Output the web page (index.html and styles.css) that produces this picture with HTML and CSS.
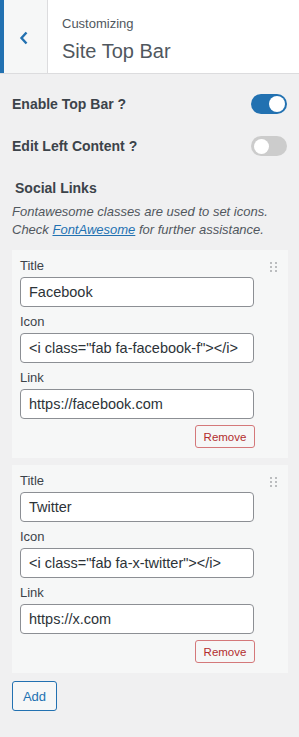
FILE: index.html
```html
<!DOCTYPE html>
<html lang="en">
<head>
<meta charset="utf-8">
<title>Site Top Bar</title>
<link rel="stylesheet" href="styles.css">
</head>
<body>
<div class="panel">
  <header class="head">
    <button class="back" aria-label="Back">
      <svg width="10" height="14" viewBox="0 0 10 14"><path d="M7.5 1.5 L2.5 7 L7.5 12.5" fill="none" stroke="#2271b1" stroke-width="2.4"/></svg>
    </button>
    <div class="head-text">
      <span class="crumb">Customizing</span>
      <h1 class="title">Site Top Bar</h1>
    </div>
  </header>

  <div class="body">
    <div class="toggle-row">
      <span class="toggle-label">Enable Top Bar ?</span>
      <span class="switch on"><span class="knob"></span></span>
    </div>
    <div class="toggle-row second">
      <span class="toggle-label">Edit Left Content ?</span>
      <span class="switch"><span class="knob"></span></span>
    </div>

    <h2 class="section">Social Links</h2>
    <p class="desc">Fontawesome classes are used to set icons.<br>Check <a href="#">FontAwesome</a> for further assistance.</p>

    <div class="card">
      <div class="fields">
        <label class="lbl first">Title</label>
        <div class="inp">Facebook</div>
        <label class="lbl">Icon</label>
        <div class="inp">&lt;i class="fab fa-facebook-f"&gt;&lt;/i&gt;</div>
        <label class="lbl">Link</label>
        <div class="inp">https://facebook.com</div>
        <div class="actions"><button class="remove">Remove</button></div>
      </div>
      <span class="handle"><i></i><i></i><i></i><i></i><i></i><i></i></span>
    </div>

    <div class="card">
      <div class="fields">
        <label class="lbl first">Title</label>
        <div class="inp">Twitter</div>
        <label class="lbl">Icon</label>
        <div class="inp">&lt;i class="fab fa-x-twitter"&gt;&lt;/i&gt;</div>
        <label class="lbl">Link</label>
        <div class="inp">https://x.com</div>
        <div class="actions"><button class="remove">Remove</button></div>
      </div>
      <span class="handle"><i></i><i></i><i></i><i></i><i></i><i></i></span>
    </div>

    <button class="add">Add</button>
  </div>
</div>
</body>
</html>
```

FILE: styles.css
```css
* { box-sizing: border-box; }
html, body { margin: 0; padding: 0; }
body {
  background: #f0f0f1;
  font-family: "Liberation Sans", Arial, sans-serif;
  color: #3c434a;
  width: 299px;
  height: 737px;
  overflow: hidden;
}
.head {
  display: flex;
  height: 74px;
  background: #fff;
  border-bottom: 1px solid #dcdcde;
}
.back {
  width: 48px;
  height: 73px;
  padding: 0;
  margin: 0;
  border: 0;
  border-left: 4px solid #2271b1;
  border-right: 1px solid #dcdcde;
  background: #f6f7f7;
  display: flex;
  align-items: center;
  justify-content: center;
  padding-right: 4px;
  padding-top: 2px;
}
.head-text {
  display: flex;
  flex-direction: column;
  padding: 15px 0 0 14px;
}
.crumb {
  font-size: 13px;
  line-height: 18px;
  color: #50575e;
}
.title {
  margin: 5px 0 0;
  font-size: 20px;
  line-height: 26px;
  font-weight: 400;
  color: #50575e;
}
.body {
  padding: 18px 12px 0 12px;
}
.toggle-row {
  display: flex;
  align-items: center;
  justify-content: space-between;
  height: 24px;
}
.toggle-row.second { margin-top: 18px; }
.toggle-label {
  font-size: 14px;
  font-weight: 700;
  color: #3c434a;
}
.switch {
  width: 36px;
  height: 20px;
  border-radius: 10px;
  background: #cccccc;
  display: flex;
  align-items: center;
  padding: 0 3px;
}
.switch .knob {
  width: 15px;
  height: 15px;
  border-radius: 50%;
  background: #fff;
}
.switch.on {
  background: #2271b1;
  justify-content: flex-end;
  padding: 0 2px;
}
.switch.on .knob {
  width: 16px;
  height: 16px;
}
.section {
  margin: 20px 0 0 3px;
  font-size: 14px;
  line-height: 20px;
  font-weight: 700;
  color: #3c434a;
}
.desc {
  margin: 5px 0 0;
  font-size: 13px;
  line-height: 18px;
  font-style: italic;
  color: #50575e;
}
.desc a { color: #2271b1; text-decoration: underline; }
.card {
  margin-top: 11px;
  width: 276px;
  background: #f6f7f7;
  display: flex;
  padding: 7px 8px 10px 8px;
}
.card + .card { margin-top: 7px; }
.fields {
  width: 234px;
  display: flex;
  flex-direction: column;
}
.lbl {
  display: block;
  font-size: 13px;
  line-height: 18px;
  margin: 6px 0 2px;
  color: #3c434a;
}
.lbl.first { margin-top: 0; }
.inp {
  height: 30px;
  border: 1px solid #8c8f94;
  border-radius: 4px;
  background: #fff;
  font-size: 14.5px;
  line-height: 28px;
  padding: 0 8px;
  color: #2c3338;
  white-space: nowrap;
  overflow: hidden;
}
.actions {
  display: flex;
  justify-content: flex-end;
  margin-top: 6px;
}
.remove {
  height: 23px;
  width: 60px;
  margin-right: -1px;
  padding: 0;
  font-family: "Liberation Sans", Arial, sans-serif;
  font-size: 11.5px;
  color: #b32d2e;
  background: #f6f7f7;
  border: 1px solid #d4787a;
  border-radius: 3px;
}
.handle {
  margin: 5px 0 0 16px;
  width: 7px;
  height: 10px;
  display: grid;
  grid-template-columns: 2px 2px;
  column-gap: 3px;
  row-gap: 2px;
  align-content: start;
}
.handle i {
  width: 2px;
  height: 2px;
  background: #a7aaad;
  border-radius: 1px;
}
.add {
  margin-top: 8px;
  width: 45px;
  height: 30px;
  padding: 0;
  font-family: "Liberation Sans", Arial, sans-serif;
  font-size: 13px;
  color: #2271b1;
  background: #f6f7f7;
  border: 1px solid #2271b1;
  border-radius: 3px;
}
```
